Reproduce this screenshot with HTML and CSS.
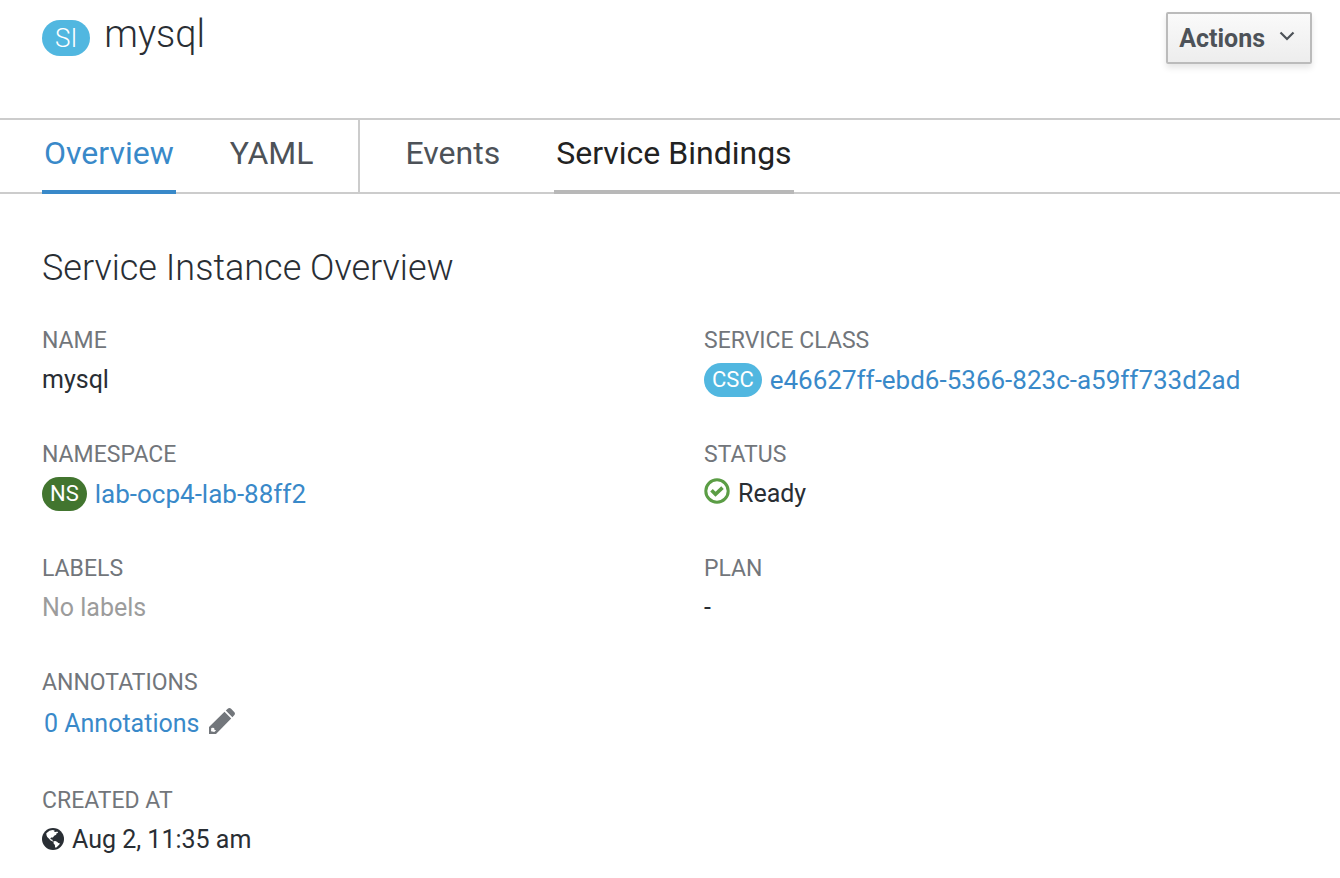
FILE: index.html
```html
<!DOCTYPE html>
<html lang="en">
<head>
<meta charset="utf-8">
<title>mysql</title>
<link rel="stylesheet" href="styles.css">
</head>
<body>
<header class="page-header">
  <h1 class="page-title"><span class="badge badge-large">SI</span><span>mysql</span></h1>
  <button class="actions" type="button">Actions
    <svg class="chevron" viewBox="0 0 16 10" aria-hidden="true"><path d="M1.500 1.500 8 8l6.500-6.500" fill="none" stroke="currentColor" stroke-width="2.200"/></svg>
  </button>
</header>
<nav class="tabs">
  <div class="tab-group">
    <a class="tab tab-active" href="#overview">Overview</a>
    <a class="tab" href="#yaml">YAML</a>
  </div>
  <div class="tab-group">
    <a class="tab" href="#events">Events</a>
    <a class="tab tab-hover" href="#bindings">Service Bindings</a>
  </div>
</nav>
<main class="content" id="overview">
  <h2 class="section-title">Service Instance Overview</h2>
  <div class="columns">
    <dl class="details">
      <div class="item"><dt>NAME</dt><dd>mysql</dd></div>
      <div class="item"><dt>NAMESPACE</dt><dd><span class="badge badge-green">NS</span><a href="#namespace">lab-ocp4-lab-88ff2</a></dd></div>
      <div class="item"><dt>LABELS</dt><dd class="muted">No labels</dd></div>
      <div class="item"><dt>ANNOTATIONS</dt><dd class="value-tall">
        <button class="link-button" type="button">0 Annotations
          <svg class="pencil" viewBox="0 0 26 26" aria-hidden="true">
            <path fill="currentColor" fill-rule="evenodd" d="M0 26v-7L15.500 3.800l6.700 6.700L7 26zM2.300 20l-.3 3.200 3.300.8 1.800-1.800-1.700-.4-.2-1.700-1.700-.3z"/>
            <path fill="currentColor" d="M16.800 2.600l1.900-1.800c1-1 2.400-1 3.400 0l3.100 3.100c1 1 1 2.400 0 3.400l-1.800 1.900z"/>
          </svg>
        </button></dd></div>
      <div class="item"><dt>CREATED AT</dt><dd>
        <svg class="globe" viewBox="0 0 22 22" aria-hidden="true">
          <circle cx="11" cy="11" r="11" fill="currentColor"/>
          <path fill="#fff" d="M4.300 5.200 7.500 2.800l3-.9 2.200.6-.8 1.100 1.900.4 1.400-.5 1 1.300-1.800.7-.2 1.300-2 .9-1.300 1.900-1.800-.1-.8 1.200.9.7.9-.2.4 1.200 1 .8-.7.400-2.200-1-1.800-2-1.600-1.600-.7-1.800z"/>
          <path fill="#fff" d="m11.500 13.200 1.800-.3 1.700.9 1.300 1.100 1.500.3-.4 1.300-1.500 1.500-1.500 1.400-1.300.2-.2-2.500-1.300-1.600z"/>
        </svg><time>Aug 2, 11:35 am</time></dd></div>
    </dl>
    <dl class="details">
      <div class="item"><dt>SERVICE CLASS</dt><dd><span class="badge">CSC</span><a href="#class">e46627ff-ebd6-5366-823c-a59ff733d2ad</a></dd></div>
      <div class="item"><dt>STATUS</dt><dd>
        <svg class="check" viewBox="0 0 26 26" aria-hidden="true"><circle cx="13" cy="13" r="11.200" fill="none" stroke="currentColor" stroke-width="3"/><path d="m7.500 12.300 4 4 7-6.700" fill="none" stroke="currentColor" stroke-width="3.600"/></svg><span>Ready</span></dd></div>
      <div class="item"><dt>PLAN</dt><dd>-</dd></div>
    </dl>
  </div>
</main>
</body>
</html>
```
FILE: styles.css
```css
* { box-sizing: border-box; }

body {
  margin: 0;
  background: #fff;
  color: #292e34;
  font-family: Roboto, "Liberation Sans", sans-serif;
  font-size: 25px;
}

a { color: #3989c9; text-decoration: none; }

.page-header {
  display: flex;
  justify-content: space-between;
  align-items: flex-start;
  padding: 12px 28px 54px 42px;
}

.page-title {
  display: flex;
  align-items: center;
  gap: 14px;
  margin: 0;
  font-size: 38px;
  font-weight: 300;
  line-height: 44px;
}

.badge {
  flex: none;
  padding: 0 8px;
  border-radius: 17px;
  background: #51b7e0;
  color: #fff;
  font-size: 22px;
  line-height: 34px;
}

.badge-large {
  align-self: flex-end;
  padding: 0 13px;
  border-radius: 18px;
  font-size: 26px;
  line-height: 36px;
}

.badge-green { background: #42752f; }

.actions {
  display: flex;
  align-items: center;
  gap: 14px;
  height: 52px;
  padding: 0 15px 0 11px;
  border: 2px solid #bbb;
  border-radius: 2px;
  background: linear-gradient(#fafafa, #ededed);
  box-shadow: 0 4px 6px rgba(3, 3, 3, 0.1);
  color: #4d5258;
  font: 700 25px Roboto, "Liberation Sans", sans-serif;
}

.chevron { width: 16px; height: 10px; margin-bottom: 4px; }

.tabs {
  display: flex;
  border-top: 2px solid #ccc;
  border-bottom: 2px solid #ccc;
}

.tab-group {
  display: flex;
  gap: 52px;
  padding: 0 44px;
}

.tab-group:first-child {
  padding: 0 42px;
  border-right: 2px solid #ccc;
}

.tab {
  margin-bottom: -2px;
  padding: 13px 2px 17px;
  border-bottom: 4px solid transparent;
  color: #4d5258;
  font-size: 32px;
  line-height: 40px;
}

.tab-active { border-color: #3989c9; color: #3989c9; }
.tab-hover { border-color: #b8b8b8; color: #222; }

.content { padding: 50px 16px 20px 42px; }

.section-title {
  margin: 0 0 29px;
  font-size: 36px;
  font-weight: 300;
  line-height: 48px;
}

.columns {
  display: grid;
  grid-template-columns: 1fr 1fr;
  gap: 42px;
}

.details {
  display: flex;
  flex-direction: column;
  gap: 36px;
  margin: 0;
}

dt {
  color: #72767b;
  font-size: 23px;
  line-height: 40px;
}

dd {
  display: flex;
  align-items: center;
  gap: 8px;
  height: 38px;
  margin: 0;
  line-height: 38px;
}

dd a { font-size: 26px; }

.value-tall { height: 42px; }
.muted { color: #9c9c9c; }

.link-button {
  display: flex;
  align-items: center;
  gap: 10px;
  padding: 0 2px;
  border: 0;
  background: none;
  color: #3989c9;
  font: inherit;
}

.pencil { width: 26px; height: 26px; margin-bottom: 6px; color: #72767b; }
.globe { width: 22px; height: 22px; margin-bottom: 2px; }
.check { width: 26px; height: 26px; margin-bottom: 6px; color: #5b9d45; }
```
